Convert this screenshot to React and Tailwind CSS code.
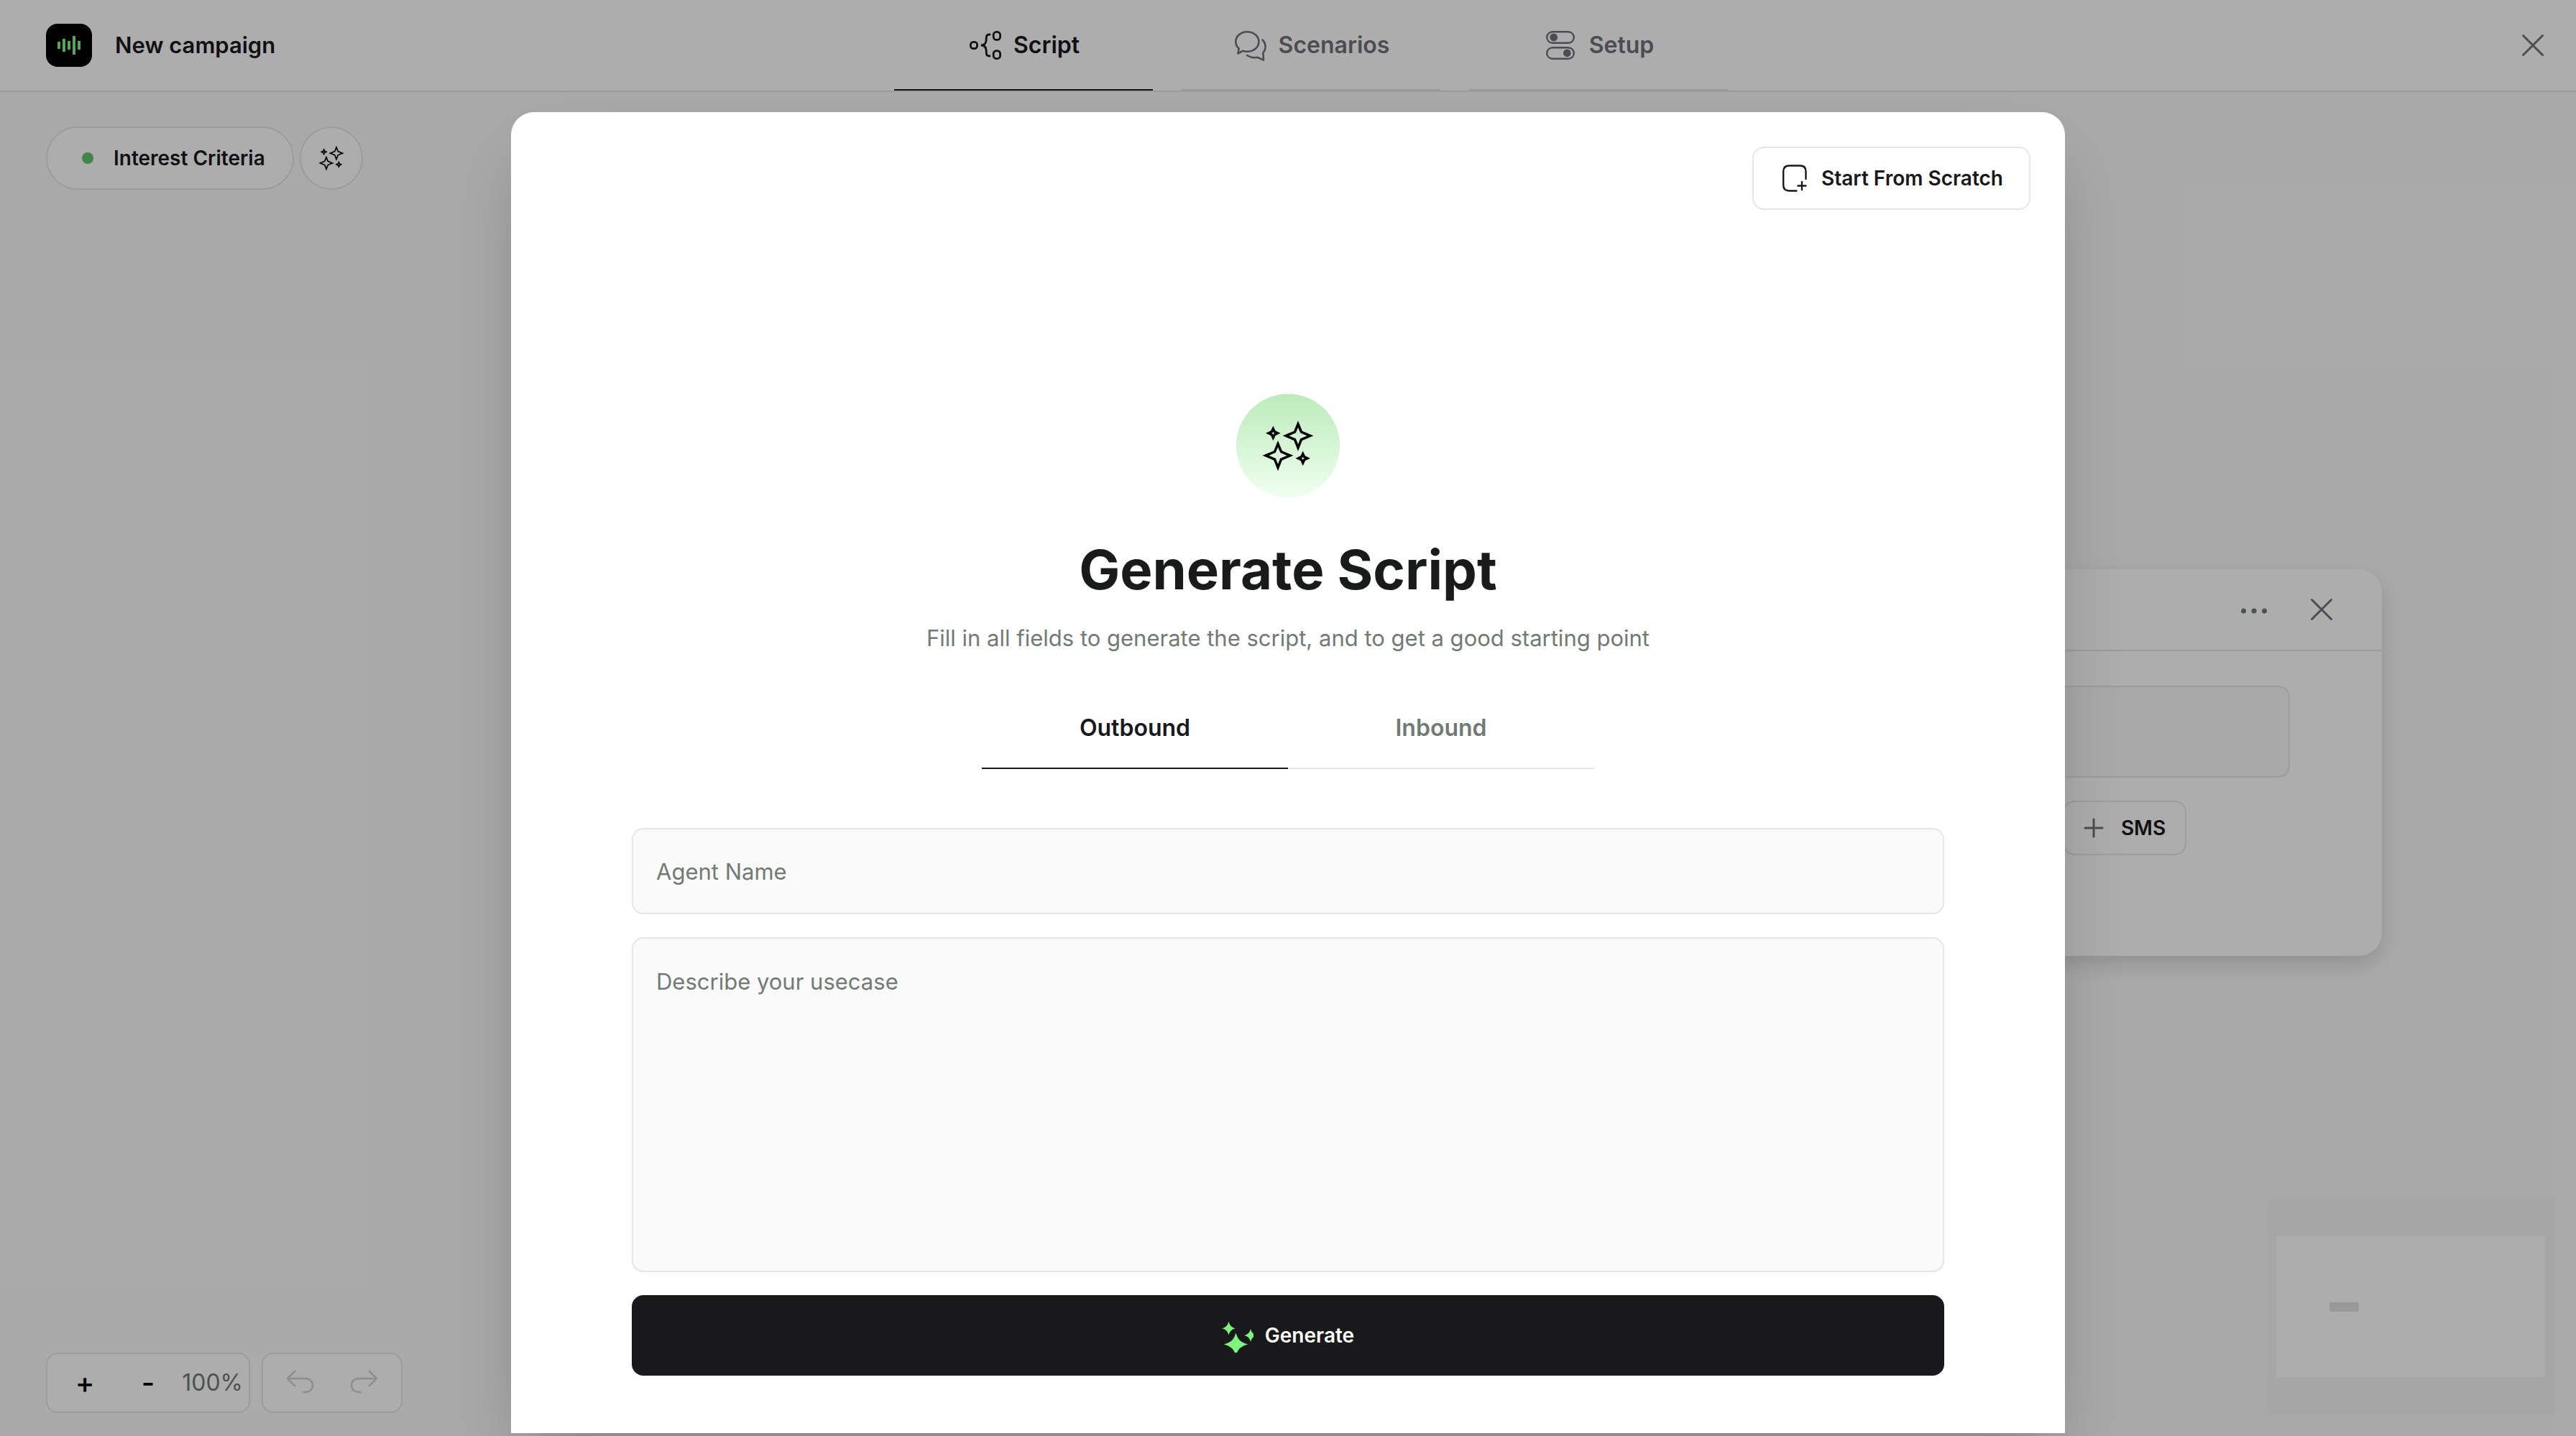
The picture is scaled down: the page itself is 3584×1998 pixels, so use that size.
const STAR = 'M0 -1C0.16 -0.4 0.4 -0.16 1 0C0.4 0.16 0.16 0.4 0 1C-0.16 0.4 -0.4 0.16 -1 0C-0.4 -0.16 -0.16 -0.4 0 -1Z';

function Sparkles({ className }) {
  return (
    <svg viewBox="0 0 72 72" className={className} fill="none" stroke="currentColor" strokeWidth="3.5" strokeLinejoin="miter" strokeMiterlimit="10" aria-hidden="true">
      <path d="M50 6L54.500 17L67 22.300L54.500 27.600L50 39L45.500 27.600L33 22.300L45.500 17Z" />
      <path d="M22 33.500L26.500 44.500L39 49.800L26.500 55.100L22 66.500L17.500 55.100L5 49.800L17.500 44.500Z" />
      <path d="M15.300 12.500L17.300 16.700L21.500 18.700L17.300 20.700L15.300 24.900L13.300 20.700L9.100 18.700L13.300 16.700Z" />
      <path d="M56.700 47.500L58.700 51.700L62.900 53.700L58.700 55.700L56.700 59.900L54.700 55.700L50.500 53.700L54.700 51.700Z" />
    </svg>
  );
}

function CloseIcon() {
  return (
    <svg viewBox="0 0 32 32" className="size-8" fill="none" stroke="currentColor" strokeWidth="3" strokeLinecap="round" aria-hidden="true">
      <path d="M2.500 2.500L29.500 29.500M29.500 2.500L2.500 29.500" />
    </svg>
  );
}

function ScriptIcon() {
  return (
    <svg viewBox="0 0 48 48" className="size-12" fill="none" stroke="currentColor" strokeWidth="2.8" strokeLinecap="round" aria-hidden="true">
      <rect x="4.400" y="19.400" width="9.200" height="9.200" rx="4" />
      <rect x="36.200" y="5.400" width="9.400" height="11" rx="4.200" />
      <rect x="36.200" y="31.600" width="9.400" height="11" rx="4.200" />
      <path d="M31 9C24.500 9 26.800 14 26 18C25.400 22 23 24 18.800 24C23 24 25.400 26 26 30C26.800 34 24.500 39 31 39" />
    </svg>
  );
}

function ChatIcon() {
  return (
    <svg viewBox="0 0 48 48" className="size-12" fill="none" stroke="currentColor" strokeWidth="2.6" strokeLinecap="round" strokeLinejoin="round" aria-hidden="true">
      <path d="M20.300 5.200C29.300 5.200 36.400 11.300 36.400 19C36.400 26.700 29.300 32.800 20.300 32.800C18 32.800 15.800 32.400 13.800 31.800L7.400 35.600L8.600 28.500C5.900 26 4.300 22.700 4.300 19C4.300 11.300 11.300 5.200 20.300 5.200Z" />
      <path d="M41.500 16.500C46.700 21.500 46.800 29.500 42.300 34.500L43 44.600L34.500 40.800C29.500 41.800 24 40.600 20 38" />
    </svg>
  );
}

function SetupIcon() {
  return (
    <svg viewBox="0 0 48 48" className="size-12" fill="none" stroke="currentColor" strokeWidth="2.4" aria-hidden="true">
      <rect x="5.200" y="5.200" width="37.600" height="15.600" rx="7.800" />
      <rect x="5.200" y="27.200" width="37.600" height="15.600" rx="7.800" />
      <circle cx="14.700" cy="13" r="5.400" fill="currentColor" stroke="none" />
      <circle cx="33.300" cy="34.800" r="5.400" fill="currentColor" stroke="none" />
    </svg>
  );
}

function NoteIcon() {
  return (
    <svg viewBox="0 0 40 40" className="size-10" fill="none" stroke="currentColor" strokeWidth="2.4" strokeLinecap="round" aria-hidden="true">
      <path d="M36.500 21V10.500C36.500 5.500 33.500 2.500 28.500 2.500H13.200C8.200 2.500 5.200 5.500 5.200 10.500V29.500C5.200 34.500 8.200 37.500 13.200 37.500H23.500" />
      <path d="M31 25V36M25.500 30.500H36.500" />
    </svg>
  );
}

function GenerateIcon() {
  return (
    <svg viewBox="0 0 44 48" className="h-12 w-11" fill="#7ef57e" aria-hidden="true">
      <path d={STAR} transform="translate(9.500 14.300) scale(9.500)" />
      <path d={STAR} transform="translate(40 24) scale(9)" />
      <path d={STAR} transform="translate(19.500 36.500) scale(17 16)" />
    </svg>
  );
}

function UndoIcon({ className }) {
  return (
    <svg viewBox="0 0 40 36" className={className} fill="none" stroke="currentColor" strokeWidth="2.5" strokeLinecap="round" strokeLinejoin="round" aria-hidden="true">
      <path d="M12 2L2 12L12 22M2 12H26C33 12 37 16 37 21.500C37 27 33 31 26 31H24" />
    </svg>
  );
}

const tabs = [
  { label: 'Script', Icon: ScriptIcon, active: true },
  { label: 'Scenarios', Icon: ChatIcon },
  { label: 'Setup', Icon: SetupIcon },
];

function Header() {
  return (
    <header className="grid h-32 grid-cols-[1fr_auto_1fr] items-center border-b-2 border-[#e6e6e6] bg-white pl-16">
      <div className="flex items-center gap-8">
        <span className="flex h-15 w-16 items-center justify-center rounded-2xl bg-black">
          <svg viewBox="0 0 32 30" className="h-[30px] w-8" fill="#7ef57e" aria-hidden="true">
            <rect x="0" y="10" width="4" height="10" />
            <rect x="7" y="6" width="4" height="18" />
            <rect x="14" y="9" width="4" height="12" />
            <rect x="21" y="2" width="4" height="26" />
            <rect x="28" y="9" width="4" height="12" />
          </svg>
        </span>
        <h1 className="text-[31px] leading-10 font-semibold text-[#19191b]">New campaign</h1>
      </div>
      <nav className="flex gap-10 self-stretch">
        {tabs.map(({ label, Icon, active }) => (
          <button
            key={label}
            className={
              'flex w-90 items-center justify-center gap-4 border-b-2 pt-0.5 text-[32px] leading-10 font-semibold ' +
              (active ? 'border-[#19191b] text-[#19191b]' : 'border-[#e2e5e3] text-[#71717a]')
            }
          >
            <Icon />
            {label}
          </button>
        ))}
      </nav>
      <button aria-label="Close" className="mr-11 justify-self-end text-[#71717a]">
        <CloseIcon />
      </button>
    </header>
  );
}

function NodeCard() {
  return (
    <section className="absolute top-[792px] right-[270px] flex h-[538px] w-[1200px] flex-col rounded-[32px] bg-white shadow-[0_12px_30px_rgba(0,0,0,0.14)]">
      <div className="flex h-[114px] items-center justify-end gap-15 border-b-2 border-[#e6e6e6] pr-17">
        <button aria-label="More" className="text-[#717a74]">
          <svg viewBox="0 0 36 32" className="h-8 w-9" fill="currentColor" aria-hidden="true">
            <circle cx="3.500" cy="18" r="3.500" />
            <circle cx="18" cy="18" r="3.500" />
            <circle cx="32.500" cy="18" r="3.500" />
          </svg>
        </button>
        <button aria-label="Close node" className="text-[#71717a]">
          <CloseIcon />
        </button>
      </div>
      <div className="flex flex-col items-end gap-8 pt-12 pr-32">
        <input aria-label="Message" className="h-32 w-[1000px] rounded-2xl border-2 border-[#e6e6e6] bg-[#fafafa]" />
        <button className="mr-36 flex h-19 w-43 items-center justify-center gap-6 rounded-2xl border-2 border-[#e6e6e6] text-[28px] leading-9 font-semibold text-[#19191b]">
          <svg viewBox="0 0 28 28" className="size-7" fill="none" stroke="#71717a" strokeWidth="3" strokeLinecap="round" aria-hidden="true">
            <path d="M14 2V26M2 14H26" />
          </svg>
          SMS
        </button>
      </div>
    </section>
  );
}

function Canvas() {
  return (
    <main className="flex flex-1 flex-col justify-between">
      <div className="flex gap-2 pt-12 pl-16">
        <button className="flex h-22 items-center gap-7 rounded-full border-2 border-[#e6e6e6] bg-white pr-[38px] pl-12 text-[28px] leading-9 font-semibold text-[#19191b]">
          <span className="size-4 rounded-full bg-[#5fc46d]" />
          Interest Criteria
        </button>
        <button aria-label="Generate criteria" className="flex size-22 items-center justify-center rounded-full border-2 border-[#e6e6e6] bg-white text-black">
          <Sparkles className="size-9" />
        </button>
      </div>
      <NodeCard />
      <div className="flex items-end justify-between pr-[30px] pb-[30px] pl-16">
        <div className="mb-0.5 flex gap-4 bg-[#fcfcfc]">
          <div className="flex h-21 w-71 items-center rounded-2xl border-2 border-[#e6e6e6] bg-white">
            <button className="w-26 text-center text-[40px] leading-10 font-medium text-black">+</button>
            <button className="w-18 text-center text-[40px] leading-10 font-medium text-black">-</button>
            <span className="flex-1 pr-2 text-right text-[32px] leading-10 text-[#717a74]">100%</span>
          </div>
          <div className="flex h-21 w-49 items-center justify-center gap-12 rounded-2xl border-2 border-[#e6e6e6] bg-white text-[#d2d2d2]">
            <button aria-label="Undo"><UndoIcon className="h-9 w-10" /></button>
            <button aria-label="Redo"><UndoIcon className="h-9 w-10 -scale-x-100" /></button>
          </div>
        </div>
        <div className="h-[300px] w-[400px] bg-[#f5f5f5] px-[13px] py-[52px]">
          <div className="h-full bg-white pt-[92px] pl-[74px]">
            <div className="h-[13px] w-[41px] rounded-xs bg-[#e2e2e2]" />
          </div>
        </div>
      </div>
    </main>
  );
}

function GenerateDialog() {
  return (
    <div role="dialog" aria-labelledby="dialog-title" className="mx-auto w-full max-w-[2162px] rounded-t-[32px] bg-white pb-20 shadow-[0_50px_100px_-24px_rgba(0,0,0,0.25)]">
      <div className="flex justify-end p-12">
        <button className="flex h-22 items-center gap-[18px] rounded-2xl border-2 border-[#e6e6e6] px-9 text-[28px] leading-9 font-semibold text-[#19191b]">
          <NoteIcon />
          Start From Scratch
        </button>
      </div>
      <div className="flex flex-col items-center px-42 pt-52">
        <span className="flex size-36 items-center justify-center rounded-full bg-linear-to-b from-[#bcebbb] to-[#f0fff0] text-black">
          <Sparkles className="size-18" />
        </span>
        <h2 id="dialog-title" className="mt-13 text-[76px] leading-24 font-bold text-[#191b1a]">Generate Script</h2>
        <p className="mt-7 text-[31px] leading-10 text-[#717a74]">Fill in all fields to generate the script, and to get a good starting point</p>
        <div role="tablist" className="mt-[50px] flex text-[32px] leading-10 font-semibold">
          <button role="tab" aria-selected="true" className="h-28 w-[426px] border-b-2 border-[#19191b] text-[#19191b]">Outbound</button>
          <button role="tab" aria-selected="false" className="h-28 w-[426px] border-b-2 border-[#e6e6e6] text-[#717a74]">Inbound</button>
        </div>
        <form className="mt-[82px] flex w-full flex-col gap-8">
          <input aria-label="Agent Name" placeholder="Agent Name" className="h-30 rounded-2xl border-2 border-[#e6e6e6] bg-[#fafafa] px-8 text-[31px] leading-10 placeholder:text-[#717a74]" />
          <textarea aria-label="Describe your usecase" placeholder="Describe your usecase" className="h-[466px] resize-none rounded-2xl border-2 border-[#e6e6e6] bg-[#fafafa] px-8 py-10 text-[31px] leading-10 placeholder:text-[#717a74]" />
          <button type="button" className="flex h-28 items-center justify-center gap-4 rounded-2xl bg-[#19191b] text-[28px] leading-9 font-semibold text-white">
            <GenerateIcon />
            Generate
          </button>
        </form>
      </div>
    </div>
  );
}

export default function App() {
  return (
    <div className="relative flex h-screen flex-col overflow-hidden bg-[#fafafa] font-['Inter','Liberation_Sans',sans-serif] antialiased">
      <Header />
      <Canvas />
      <div className="absolute inset-0 overflow-hidden bg-black/32 pt-39">
        <GenerateDialog />
      </div>
    </div>
  );
}
